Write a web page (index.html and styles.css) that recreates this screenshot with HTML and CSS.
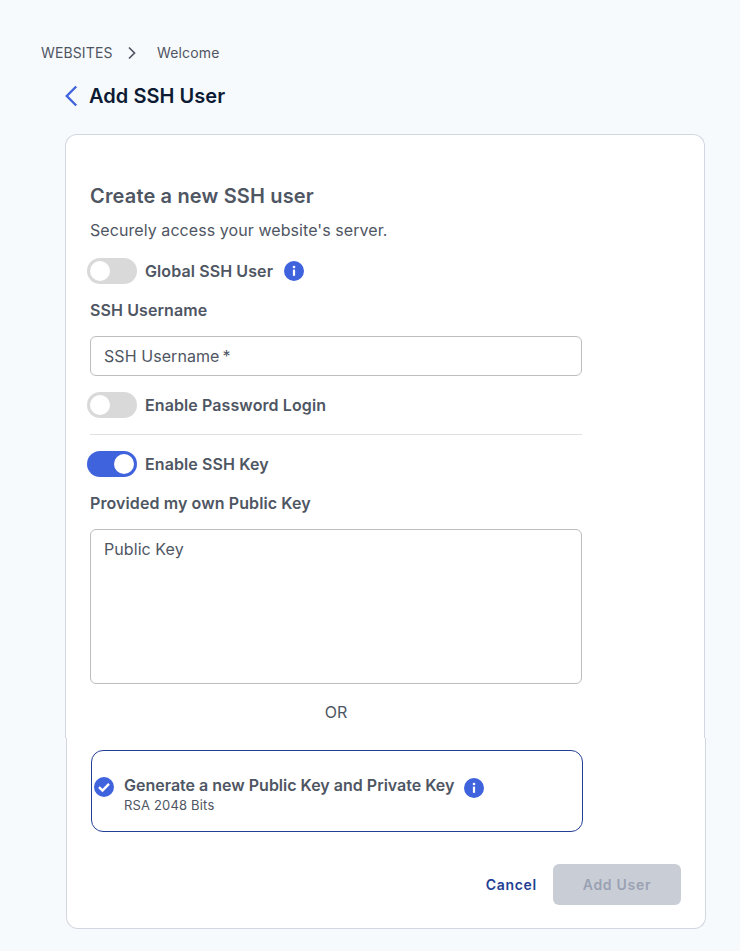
FILE: index.html
```html
<!DOCTYPE html>
<html lang="en">
<head>
<meta charset="utf-8">
<title>Add SSH User</title>
<link rel="stylesheet" href="styles.css">
</head>
<body>
<nav class="crumbs">
  <span>WEBSITES</span>
  <svg class="crumb-sep" width="10" height="14" viewBox="0 0 10 14"><path d="M2 1.5 7.5 7 2 12.5" fill="none" stroke="#4f5663" stroke-width="1.7"/></svg>
  <span>Welcome</span>
</nav>
<header class="head">
  <svg class="back" width="14" height="22" viewBox="0 0 14 22"><path d="M11.2 1.5 1.8 11l9.4 9.5" fill="none" stroke="#3f63dc" stroke-width="2.4"/></svg>
  <h1>Add SSH User</h1>
</header>
<main>
  <section class="card-top">
    <h2>Create a new SSH user</h2>
    <p class="sub">Securely access your website's server.</p>
    <div class="column">
      <div class="toggle-row first">
        <span class="toggle"><i></i></span>
        <span class="label">Global SSH User</span>
        <svg class="info" width="20" height="20" viewBox="0 0 20 20"><circle cx="10" cy="10" r="10" fill="#3f63dc"/><rect x="8.9" y="8.6" width="2.2" height="6.2" fill="#fff"/><circle cx="10" cy="6" r="1.3" fill="#fff"/></svg>
      </div>
      <div class="field-label user-label">SSH Username</div>
      <div class="input">SSH Username<span class="req">*</span></div>
      <div class="toggle-row pass">
        <span class="toggle"><i></i></span>
        <span class="label">Enable Password Login</span>
      </div>
      <hr>
      <div class="toggle-row key">
        <span class="toggle on"><i></i></span>
        <span class="label">Enable SSH Key</span>
      </div>
      <div class="field-label key-label">Provided my own Public Key</div>
      <div class="textarea">Public Key</div>
      <div class="or">OR</div>
    </div>
  </section>
  <section class="card-bottom">
    <div class="choice">
      <svg class="check" width="20" height="20" viewBox="0 0 20 20"><circle cx="10" cy="10" r="10" fill="#3f63dc"/><path d="M5 10.2 8.5 13.6 15 6.8" fill="none" stroke="#fff" stroke-width="2.4"/></svg>
      <div class="choice-text">
        <div class="choice-title">
          <span>Generate a new Public Key and Private Key</span>
          <svg class="info lower" width="20" height="20" viewBox="0 0 20 20"><circle cx="10" cy="10" r="10" fill="#3f63dc"/><rect x="8.9" y="8.6" width="2.2" height="6.2" fill="#fff"/><circle cx="10" cy="6" r="1.3" fill="#fff"/></svg>
        </div>
        <div class="choice-sub">RSA 2048 Bits</div>
      </div>
    </div>
    <div class="actions">
      <button class="cancel" type="button">Cancel</button>
      <button class="submit" type="button" disabled>Add User</button>
    </div>
  </section>
</main>
</body>
</html>
```
FILE: styles.css
```css
* { box-sizing: border-box; }
html, body { margin: 0; height: 100%; }
body {
  background: #f7fafd;
  color: #4f5663;
  font-family: Inter, "Liberation Sans", sans-serif;
  padding: 44px 34px 0 41px;
  overflow: hidden;
}
.crumbs {
  display: flex;
  align-items: center;
  height: 18px;
  font-size: 14px;
  line-height: 18px;
  letter-spacing: 0.13px;
}
.crumb-sep { margin: 0 20.5px 0 14px; }
.head {
  display: flex;
  align-items: center;
  height: 28px;
  margin: 20px 0 0 24px;
}
.back { margin-right: 10px; }
h1 {
  margin: 0;
  font-size: 20px;
  line-height: 28px;
  font-weight: 600;
  letter-spacing: 0.04px;
  color: #0c1a33;
}
main { margin: 24px 0 0 24px; }
.card-top {
  width: 640px;
  height: 604px;
  padding: 47px 24px 0;
  background: #fff;
  border: 1px solid #d2d6df;
  border-bottom: 0;
  border-radius: 12px 12px 0 0;
}
h2 {
  margin: 0;
  font-size: 20px;
  line-height: 28px;
  font-weight: 600;
  letter-spacing: 0.16px;
  color: #4f5663;
}
.sub {
  margin: 8px 0 0;
  font-size: 16px;
  line-height: 24px;
  letter-spacing: 0.07px;
}
.column { width: 492px; }
.toggle-row {
  display: flex;
  align-items: center;
  height: 26px;
  margin-left: -3px;
}
.first { margin-top: 16px; }
.pass { margin-top: 16px; }
.key { margin-top: 16px; }
.toggle {
  width: 50px;
  height: 26px;
  padding: 3px;
  border-radius: 13px;
  background: #d9d9d9;
  display: flex;
  flex: none;
}
.toggle i {
  width: 20px;
  height: 20px;
  border-radius: 50%;
  background: #fff;
}
.toggle.on { background: #3f63dc; justify-content: flex-end; }
.label {
  margin-left: 8px;
  font-size: 16px;
  font-weight: 600;
  letter-spacing: 0.1px;
}
.info { margin-left: 11px; flex: none; }
.info.lower { margin: 4px 0 0 10px; }
.field-label {
  font-size: 16px;
  line-height: 22px;
  font-weight: 600;
  letter-spacing: 0.1px;
}
.user-label { margin-top: 15px; }
.key-label { margin-top: 15px; }
.input {
  height: 40px;
  margin-top: 15px;
  padding: 0 13px;
  border: 1px solid #bdbdbd;
  border-radius: 6px;
  font-size: 16px;
  line-height: 38px;
  letter-spacing: 0.07px;
}
.req { margin-left: 3px; }
hr {
  margin: 16px 0 0;
  border: 0;
  border-top: 1px solid #e0e0e0;
}
.textarea {
  height: 155px;
  margin-top: 15px;
  padding: 8px 13px;
  border: 1px solid #bdbdbd;
  border-radius: 6px;
  font-size: 16px;
  line-height: 22px;
  letter-spacing: 0.07px;
}
.or {
  margin-top: 16px;
  text-align: center;
  font-size: 16px;
  line-height: 24px;
}
.card-bottom {
  width: 640px;
  height: 191px;
  margin-left: 1px;
  padding: 12px 24px 0;
  background: #fff;
  border: 1px solid #d2d6df;
  border-top: 0;
  border-radius: 0 0 12px 12px;
}
.choice {
  display: flex;
  align-items: flex-start;
  width: 492px;
  height: 82px;
  padding: 26px 2px 0;
  border: 1px solid #233f94;
  border-radius: 12px;
}
.check { flex: none; }
.choice-text { margin: -3px 0 0 10px; }
.choice-title {
  display: flex;
  align-items: flex-start;
  font-size: 16px;
  line-height: 22px;
  font-weight: 600;
}
.choice-sub {
  margin-top: -2px;
  font-size: 13px;
  line-height: 18px;
  letter-spacing: 0.17px;
}
.actions {
  display: flex;
  justify-content: flex-end;
  align-items: center;
  margin-top: 32px;
}
button {
  border: 0;
  font-family: inherit;
  font-size: 14px;
  font-weight: 600;
  letter-spacing: 0.72px;
}
.cancel {
  padding: 0;
  background: none;
  color: #233f94;
  margin-right: 16px;
}
.submit {
  width: 128px;
  height: 41px;
  border-radius: 6px;
  background: #c9ced6;
  color: #9aa1b3;
}
```
